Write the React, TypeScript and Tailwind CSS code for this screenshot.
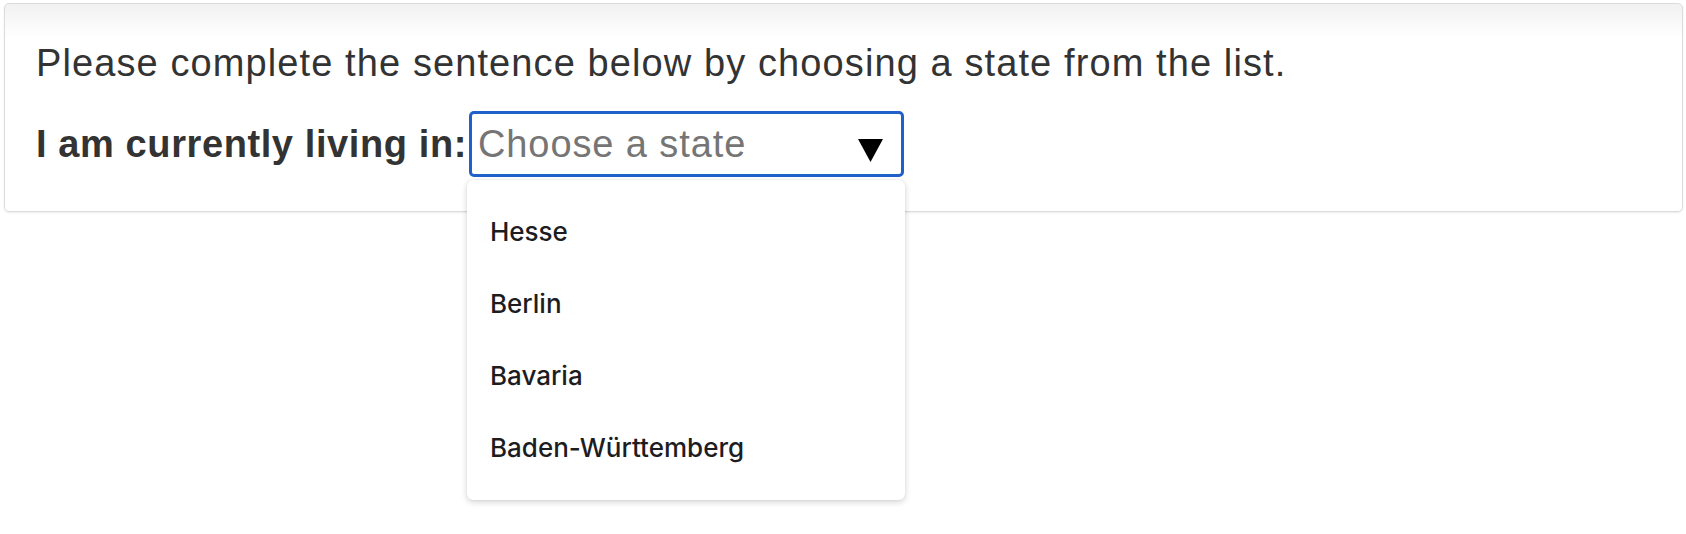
const states = ['Hesse', 'Berlin', 'Bavaria', 'Baden-Württemberg'];

export default function App() {
  return (
    <div className="min-h-screen bg-white pl-[4px] pr-[3px] pt-[3px]">
      {/* Question card */}
      <div className="rounded-[5px] border border-[#dcdcdc] bg-gradient-to-b from-[#f1f1f1] from-0% to-white to-[34px] px-[31px] pt-[37px] pb-[34px] shadow-[0_1px_2px_rgba(0,0,0,0.08)]">
        <p className="font-['Liberation_Sans',Arial,sans-serif] text-[38px] leading-[44px] tracking-[1.1px] text-[#333]">
          Please complete the sentence below by choosing a state from the list.
        </p>

        <div className="mt-[26px] flex items-center font-['Liberation_Sans',Arial,sans-serif] text-[38px] text-[#333]">
          <span className="font-bold leading-[44px] tracking-[0.6px]">I am currently living in:</span>

          <div className="relative ml-[2px]">
            {/* Select box */}
            <div className="flex h-[66px] w-[435px] items-center justify-between rounded-[5px] border-[3px] border-[#1f60c9] bg-white pl-[6px] pr-[18px]">
              <span className="leading-[44px] tracking-[0.9px] text-[#757575]">Choose a state</span>
              <svg width="25" height="23" viewBox="0 0 25 23" className="mt-[12px]">
                <polygon points="0,0 25,0 12.5,23" fill="#000" />
              </svg>
            </div>

            {/* Open menu */}
            <ul className="absolute left-[-2px] top-[69px] z-10 w-[438px] rounded-[6px] bg-white py-[16px] font-['Inter','Roboto',sans-serif] shadow-[0_2px_6px_rgba(0,0,0,0.18),0_0_1px_rgba(0,0,0,0.12)]">
              {states.map((state) => (
                <li key={state} className="h-[72px] pl-[23px] text-[26px] font-medium leading-[72px] text-[#1d1d1f]">
                  {state}
                </li>
              ))}
            </ul>
          </div>
        </div>
      </div>
    </div>
  );
}
